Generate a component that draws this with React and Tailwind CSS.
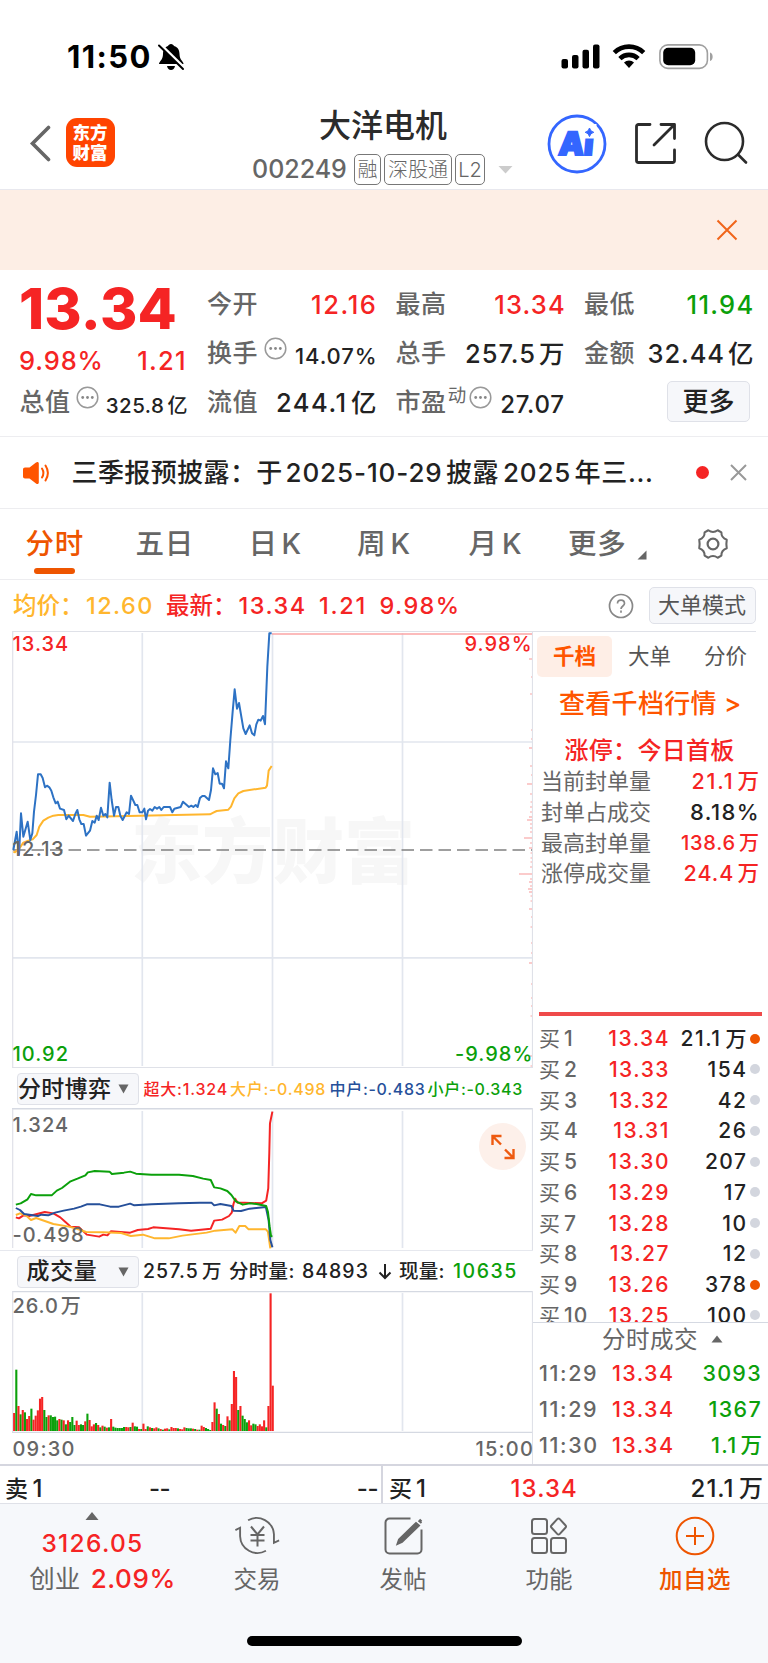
import React from "react";

const QUOTE_DOT = "#ee5500";

const pricePoints =
  "40,690 50,635 57,705 63,580 70,650 83,605 91,660 97,640 102,575 108,525 114,463 122,463 128,474 135,502 141,497 148,502 154,512 160,532 167,550 173,545 180,566 192,570 199,598 206,587 219,603 226,582 232,570 238,598 244,612 251,612 258,647 270,632 277,603 284,608 290,587 296,600 303,563 310,587 316,582 322,592 329,488 335,540 342,587 348,561 355,561 361,587 368,600 380,577 387,582 393,527 406,555 412,555 419,577 427,577 433,566 438,598 444,572 450,567 457,572 464,561 471,566 478,561 484,570 491,561 510,561 517,577 523,566 542,561 549,545 567,561 574,557 580,561 587,555 593,561 600,534 607,528 614,528 627,540 633,510 639,445 646,463 653,459 659,491 666,491 672,505 678,424 685,445 691,360 698,275 704,208 711,266 717,249 730,325 737,342 749,316 756,340 763,346 769,313 775,299 782,302 789,288 795,313 802,140 808,40 815,40";

const avgPoints =
  "40,695 45,697 58,685 70,668 85,662 98,658 110,645 118,620 130,602 145,593 160,587 175,585 250,585 270,590 350,589 420,587 630,583 640,578 650,573 685,569 693,560 703,535 715,520 730,513 797,503 801,497 806,452 815,438";

const flowLines = [
  {
    color: "#f52424",
    points:
      "46,472 55,475 68,466 85,468 130,456 155,460 175,472 190,486 205,500 230,502 252,524 288,530 300,524 312,526 322,514 378,518 400,510 430,507 445,502 520,508 555,512 612,506 622,482 645,479 665,468 673,458 678,432 683,416 690,428 710,428 760,430 773,422 779,385 782,280 784,190 791,155",
  },
  {
    color: "#ffb62e",
    points:
      "46,465 58,460 75,466 90,480 105,474 130,483 155,492 200,500 225,507 250,516 300,517 352,519 380,528 415,524 450,535 490,535 530,527 600,518 625,512 675,508 684,518 695,498 712,498 722,508 772,508 778,515 785,565",
  },
  {
    color: "#26509a",
    points:
      "46,444 58,450 70,462 110,468 120,464 140,466 160,458 185,452 215,446 235,440 252,433 290,433 320,440 345,440 378,431 390,436 440,433 520,430 580,428 614,428 622,436 640,432 672,438 678,452 700,453 725,446 772,441 780,480 785,540 791,562",
  },
  {
    color: "#0ba00b",
    points:
      "46,434 60,430 80,418 90,402 105,406 150,406 165,392 180,384 205,364 225,356 248,346 255,337 275,333 318,335 325,342 360,338 378,335 395,341 440,344 520,344 560,348 590,356 612,360 622,382 640,385 660,393 672,405 685,424 705,434 725,430 745,432 773,438 778,455 783,500 787,528 791,530",
  },
];

// one entry per minute, g = falling, r = rising
const volumes =
  "54r 184g 75r 50g 63r 56g 36r 45r 67g 34r 46r 62r 97r 102r 63g 42g 47r 47g 42g 43g 32g 36r 34g 32r 20g 32r 27g 42g 18g 31r 18r 20g 18g 29r 52g 33r 14r 20r 24g 18r 11g 16r 13g 10r 11g 36r 13g 10g 9g 9g 9g 12g 12r 11r 12g 25r 14g 13g 6r 6g 22r 6r 14g 11r 9g 8r 11r 8g 6r 4g 7r 8r 5g 12r 9r 9r 8g 6r 5r 11r 9g 8g 8g 7r 6g 4r 4g 16r 12r 9g 6g 3g 27r 86r 67g 51r 22g 18r 15g 44r 32g 81r 180r 162r 63g 75r 46g 36g 26g 32r 17r 22g 20g 15r 20r 14r 32r 11g 75r 413r 136r".split(
    " "
  );

// large resting orders along the right edge: [y, length]
const ticks = [
  [659, 3], [677, 1], [694, 2], [730, 1], [739, 1], [748, 3], [766, 2], [775, 1], [784, 5], [794, 2], [802, 1.5],
  [807, 2], [812, 2], [817, 3], [820, 5], [824, 2], [828, 2], [832, 2], [838, 8], [843, 2], [848, 3], [853, 1.5],
  [858, 1.5], [862, 1.5], [867, 2], [874, 13], [879, 2], [882, 3], [886, 2], [889, 4], [892, 3], [896, 1.5], [901, 1.5],
  [909, 3], [917, 1], [927, 1.5], [943, 1], [953, 1], [963, 3], [984, 1], [998, 1], [1006, 1], [1016, 1.5], [1056, 2], [1066, 1.5],
];

const bids = [
  ["1", "13.34", "21.1", "万", true],
  ["2", "13.33", "154", "", false],
  ["3", "13.32", "42", "", false],
  ["4", "13.31", "26", "", false],
  ["5", "13.30", "207", "", false],
  ["6", "13.29", "17", "", false],
  ["7", "13.28", "10", "", false],
  ["8", "13.27", "12", "", false],
  ["9", "13.26", "378", "", true],
  ["10", "13.25", "100", "", false],
];

const trades = [
  ["11:29", "13.34", "3093", ""],
  ["11:29", "13.34", "1367", ""],
  ["11:30", "13.34", "1.1", "万"],
];

const limitRows = [
  ["当前封单量", "21.1", "万", "text-[#f52424] text-[21.5px] tracking-[1.8px]"],
  ["封单占成交", "8.18%", "", "text-[#222] text-[22px] tracking-[1.4px]"],
  ["最高封单量", "138.6", "万", "text-[#f52424] text-[20px] tracking-[0.8px]"],
  ["涨停成交量", "24.4", "万", "text-[#f52424] text-[21.5px] tracking-[1px]"],
];

const Dots = ({ className = "" }) => (
  <svg className={`shrink-0 ${className}`} width="23" height="23" viewBox="0 0 23 23">
    <circle cx="11.5" cy="11.5" r="10.3" fill="none" stroke="#999" strokeWidth="1.5" />
    <circle cx="6.7" cy="11.5" r="1.4" fill="#888" />
    <circle cx="11.5" cy="11.5" r="1.4" fill="#888" />
    <circle cx="16.3" cy="11.5" r="1.4" fill="#888" />
  </svg>
);

const Unit = ({ children, className = "ml-[3px]" }) => (
  <span className={`font-medium tracking-normal ${className}`}>{children}</span>
);

const Label = ({ children }) => (
  <span className="shrink-0 text-[25px] font-medium tracking-[0.6px] whitespace-nowrap text-[#666]">{children}</span>
);

const StatusBar = () => (
  <div className="flex h-[88px] items-start pt-[38px] pl-[67px] text-black">
    <span className="w-[90px] text-[31px] leading-[38px] font-bold tracking-[1.4px]">11:50</span>
    <svg className="mt-[5px]" width="28" height="28" viewBox="0 0 28 28">
      <path d="M14 1c1.500 0 2.600 1 3 2 4 1 5.500 4.500 5.500 8 0 6 4 7.500 4 10H2c0-2.500 4-4 4-10 0-3.500 1.500-7 5-8 .4-1 1.500-2 3-2z" fill="#000" />
      <path d="M10 23h8c-.5 2.600-2 4-4 4s-3.500-1.400-4-4z" fill="#000" />
      <path d="M3.500 1.500L27.500 25" stroke="#fff" strokeWidth="3" />
      <path d="M2 2.500L26 26" stroke="#000" strokeWidth="2" strokeLinecap="round" />
    </svg>
    <svg className="mt-[5px] ml-[376px]" width="40" height="26" viewBox="0 0 40 26">
      <rect x="0.500" y="16" width="6.500" height="9.500" rx="2" />
      <rect x="11" y="12" width="6.500" height="13.500" rx="2" />
      <rect x="21.500" y="6.700" width="6.500" height="18.800" rx="2" />
      <rect x="32" y="1.500" width="6.500" height="24" rx="2" />
    </svg>
    <svg className="mt-[5px] ml-[11px]" width="34" height="26" viewBox="0 0 34 26">
      <path d="M2.300 9.600a21 21 0 0 1 29.400 0" fill="none" stroke="#000" strokeWidth="4.600" />
      <path d="M7.900 15.600a13 13 0 0 1 18.200 0" fill="none" stroke="#000" strokeWidth="4.600" />
      <path d="M17 25l-5-5.500a7.500 7.500 0 0 1 10 0z" />
    </svg>
    <svg className="mt-[5px] ml-[13px]" width="56" height="27" viewBox="0 0 56 27">
      <rect x="0.900" y="1.900" width="47.500" height="23.500" rx="8" fill="none" stroke="#a0a0a0" strokeWidth="1.600" />
      <rect x="4.200" y="4.800" width="32" height="17.500" rx="5" />
      <path d="M51 9.500c3.500 1 3.500 7.500 0 8.500z" fill="#a0a0a0" />
    </svg>
  </div>
);

const Header = () => (
  <div className="flex h-[102px] items-start border-b border-[#e8e8ee] pl-[29px]">
    <svg className="mt-[37px]" width="22" height="37" viewBox="0 0 22 37">
      <path d="M19.500 2.500L3.500 18.500l16 16" fill="none" stroke="#666" strokeWidth="3.600" strokeLinecap="round" />
    </svg>
    <div className="mt-[30px] ml-[14.500px] flex h-[49px] w-[49px] flex-col items-center justify-center rounded-[11px] bg-[#ff4400] text-[17.500px] leading-[20px] font-black text-white">
      <span>东方</span>
      <span>财富</span>
    </div>
    <div className="ml-[137.500px] flex w-[262px] flex-col items-center">
      <div className="mt-[18px] text-[32px] leading-[40px] font-medium text-[#2b2b2b]">大洋电机</div>
      <div className="mt-[7.500px] flex h-[32px] w-full items-center text-[20px] font-light text-[#666]">
        <span className="w-[102px] text-[25px] font-medium text-[#666]">002249</span>
        <span className="flex h-[31px] w-[27px] items-center justify-center rounded-[5px] border border-[#777]">融</span>
        <span className="ml-[3px] flex h-[31px] w-[68px] items-center justify-center rounded-[5px] border border-[#777]">深股通</span>
        <span className="ml-[3px] flex h-[31px] w-[30px] items-center justify-center rounded-[5px] border border-[#777]">L2</span>
        <svg className="ml-[13px]" width="15" height="9" viewBox="0 0 15 9">
          <path d="M0.500 1h14l-7 7.500z" fill="#ccc" />
        </svg>
      </div>
    </div>
    <svg className="mt-[25.500px] ml-[33px]" width="60" height="60" viewBox="0 0 60 60">
      <circle cx="30" cy="30" r="28" fill="none" stroke="#3466ff" strokeWidth="2.800" />
      <g transform="skewX(-5)">
        <text x="14.500" y="41" className="text-[32px] font-black" fill="#3466ff" stroke="#3466ff" strokeWidth="2">Ai</text>
      </g>
      <rect x="36.500" y="10" width="13" height="14.500" fill="#fff" />
      <path d="M42.500 14q.8 3.600 4.300 4.300-3.500.7-4.300 4.300-.8-3.600-4.300-4.300 3.500-.7 4.300-4.300z" fill="#3466ff" stroke="#3466ff" />
    </svg>
    <svg className="mt-[34px] ml-[26.500px]" width="43" height="43" viewBox="0 0 43 43" fill="none" stroke="#2b2b2b" strokeWidth="2.800" strokeLinecap="round" strokeLinejoin="round">
      <path d="M16 2.500H4.500a2 2 0 0 0-2 2v34a2 2 0 0 0 2 2h34a2 2 0 0 0 2-2V28" />
      <path d="M27 2.500h13.500v14M40 3L20 23" />
    </svg>
    <svg className="mt-[33px] ml-[26px]" width="46" height="46" viewBox="0 0 46 46" fill="none" stroke="#2b2b2b" strokeWidth="2.600" strokeLinecap="round">
      <circle cx="21.500" cy="20.500" r="18.500" />
      <path d="M35 33.500l8 8" />
    </svg>
  </div>
);

const QuotePanel = () => (
  <div className="flex h-[167px] items-start border-b border-[#ededf0] pt-[10px] pl-[20px] text-[25.500px] leading-[49px] font-[530] text-[#222]">
    <div className="flex w-[167px] flex-col">
      <div className="ml-[-1px] h-[57px] text-[57px] leading-[57px] font-extrabold tracking-[0.200px] text-[#f52424]">13.34</div>
      <div className="flex h-[41px] justify-between leading-[48px] text-[#f52424]">
        <span className="ml-[-1px] tracking-[0.900px]">9.98%</span>
        <span className="tracking-[1.300px]">1.21</span>
      </div>
      <div className="ml-[-0.500px] flex h-[49px] items-center whitespace-nowrap">
        <Label>总值</Label>
        <Dots className="mb-[11px] ml-[5px]" />
        <span className="mt-[6px] ml-[7px] text-[20.500px] tracking-[0.500px]">
          325.8<Unit className="ml-[3px] text-[20px]">亿</Unit>
        </span>
      </div>
    </div>
    <div className="ml-[20px] flex w-[170.500px] flex-col">
      <div className="flex h-[49px] justify-between">
        <Label>今开</Label>
        <span className="tracking-[1.600px] text-[#f52424]">12.16</span>
      </div>
      <div className="flex h-[49px] items-center">
        <Label>换手</Label>
        <Dots className="mb-[11px] ml-[5.500px]" />
        <span className="mt-[6px] flex-1 text-right text-[22px] tracking-[0.900px]">14.07%</span>
      </div>
      <div className="flex h-[49px] justify-between">
        <Label>流值</Label>
        <span className="tracking-[1.500px]">
          244.1<Unit className="mr-[1px] ml-[3.500px]">亿</Unit>
        </span>
      </div>
    </div>
    <div className="ml-[18px] flex w-[170.500px] flex-col">
      <div className="flex h-[49px] justify-between">
        <Label>最高</Label>
        <span className="tracking-[1.200px] text-[#f52424]">13.34</span>
      </div>
      <div className="flex h-[49px] justify-between">
        <Label>总手</Label>
        <span className="tracking-[1px]">
          257.5<Unit className="mr-[1.500px] ml-[3px]">万</Unit>
        </span>
      </div>
      <div className="flex h-[49px] items-center">
        <Label>市盈</Label>
        <span className="mb-[16px] ml-[1px] text-[18.500px] leading-[30px] font-normal text-[#666]">动</span>
        <Dots className="mb-[11px] ml-[2.500px]" />
        <span className="mt-[3px] ml-[8.500px] text-[24px] tracking-[0.700px]">27.07</span>
      </div>
    </div>
    <div className="ml-[18px] flex w-[170.500px] flex-col">
      <div className="flex h-[49px] justify-between">
        <Label>最低</Label>
        <span className="tracking-[1.300px] text-[#0ba00b]">11.94</span>
      </div>
      <div className="flex h-[49px] justify-between">
        <Label>金额</Label>
        <span className="tracking-[0.900px] whitespace-nowrap">
          32.44<Unit className="mr-[1px] ml-[3px]">亿</Unit>
        </span>
      </div>
      <div className="mt-[3px] mr-[4.500px] flex h-[41px] w-[83px] items-center justify-center self-end rounded-[5px] border border-[#dfe1e8] bg-[#f6f7fa] text-[26px] font-medium">
        更多
      </div>
    </div>
  </div>
);

const NewsBar = () => (
  <div className="flex h-[72px] items-center border-b border-[#ededf0] text-[26px] font-medium text-[#222]">
    <svg className="ml-[22px]" width="30" height="24" viewBox="0 0 30 24">
      <path d="M3 6.500h4.500l6.500-5c1.500-1 2.800-.5 2.800 1v19c0 1.500-1.300 2-2.800 1l-6.500-5H3c-1.200 0-2-.8-2-2v-7c0-1.200.8-2 2-2z" fill="#ff5500" />
      <path d="M20 7.500q2.800 4.500 0 9M23.500 4.500q4.800 7.500 0 15" fill="none" stroke="#ff5500" strokeWidth="2" strokeLinecap="round" />
    </svg>
    <div className="ml-[19.500px] flex w-[591px] whitespace-nowrap">
      <span className="w-[214px] tracking-[0.400px]">三季报预披露：于</span>
      <span className="w-[160.500px] font-[530] tracking-[0.900px]">2025-10-29</span>
      <span className="w-[57px] tracking-[0.400px]">披露</span>
      <span className="w-[71.500px] font-[530] tracking-[0.800px]">2025</span>
      <span className="tracking-[0.700px]">年三...</span>
    </div>
    <div className="ml-[33px] h-[13px] w-[13px] rounded-full bg-[#f52424]" />
    <svg className="ml-[20px]" width="19" height="19" viewBox="0 0 19 19">
      <path d="M2 2l15 15M17 2L2 17" stroke="#999" strokeWidth="2" />
    </svg>
  </div>
);

const Tabs = () => (
  <div className="flex h-[71px] border-b border-[#ededf0] text-[28.500px] leading-[70px] font-medium text-[#666]">
    <div className="ml-[25.500px] flex w-[110px] flex-col text-[#ee5500]">
      <span className="h-[59px] tracking-[0.800px]">分时</span>
      <span className="ml-[8.500px] h-[6px] w-[41px] rounded-full bg-[#ee5500]" />
    </div>
    <span className="w-[113px] tracking-[0.800px]">五日</span>
    <span className="w-[108.500px] tracking-[4.500px]">日K</span>
    <span className="w-[111.500px] tracking-[5px]">周K</span>
    <span className="w-[99.500px] tracking-[5px]">月K</span>
    <span className="w-[69px] tracking-[0.800px]">更多</span>
    <svg className="mt-[41px]" width="10" height="10" viewBox="0 0 10 10">
      <path d="M9.500 0.500v9H0.500z" fill="#666" />
    </svg>
    <svg className="mt-[17.500px] ml-[48.500px]" width="34" height="34" viewBox="0 0 34 34" fill="none" stroke="#666" strokeWidth="2.200" strokeLinejoin="round">
      <path d="M12 2.300q5 3.600 10 0l4 2.300q-.3 5.600 5.700 7.900-.8 4.500 0 9-6 2.300-5.700 7.900l-4 2.300q-5-3.600-10 0l-4-2.300q.3-5.600-5.700-7.900.8-4.500 0-9 6-2.300 5.700-7.900z" transform="translate(1.100 1.100) scale(.935)" />
      <circle cx="17" cy="17" r="5.400" />
    </svg>
  </div>
);

const InfoRow = () => (
  <div className="flex h-[51px] items-center text-[23.500px] font-[530] text-[#f52424]">
    <span className="ml-[13px] w-[73px] font-medium text-[#ffb62e]">均价：</span>
    <span className="w-[80px] tracking-[1.400px] text-[#ffb62e]">12.60</span>
    <span className="w-[72.500px] font-medium">最新：</span>
    <span className="w-[80.500px] tracking-[1.500px]">13.34</span>
    <span className="w-[60.500px] tracking-[1.700px]">1.21</span>
    <span className="w-[228px] tracking-[1.400px]">9.98%</span>
    <svg width="26" height="26" viewBox="0 0 26 26" fill="none" stroke="#888" strokeWidth="1.700">
      <circle cx="13" cy="13" r="11.500" />
      <path d="M9.500 10.500c0-4.500 7-4.500 7 0 0 2.500-3.500 2.500-3.500 5.500M13 17.600v2.200" />
    </svg>
    <span className="ml-[15px] flex h-[37px] w-[107px] items-center justify-center rounded-[5px] border border-[#dfe1e8] bg-[#f6f7fa] text-[22px] font-normal text-[#555]">
      大单模式
    </span>
  </div>
);

const PriceChart = () => (
  <svg className="block" width="533" height="437" viewBox="0 631 533 437">
    <text x="131" y="877" className="text-[71px] font-black" fill="#f7f7f7">东方财富</text>
    <g stroke="#e2e6ee" strokeWidth="1.700">
      <path d="M142.300 633V1066M272.500 633V1066M402.500 633V1066M13 742H532M13 957.800H532" />
    </g>
    <path d="M12.700 1068V631.500H532.500V1068" fill="none" stroke="#dfe1e8" strokeWidth="1.200" />
    <path d="M12 1067.500H532" stroke="#dfe1e8" strokeWidth="1.200" />
    <path d="M272 634H532" stroke="#fba5a5" strokeWidth="1.500" />
    {ticks.map(([y, len]) => (
      <path key={y} d={`M532 ${y}h${-len}`} stroke="#f8a8a8" strokeWidth="1.200" />
    ))}
    <path d="M13 850H532" stroke="#808080" strokeWidth="1.700" strokeDasharray="12.500 6" />
    <g transform="translate(0 620) scale(.33333)" fill="none" strokeLinejoin="round">
      <polyline points={avgPoints} stroke="#ffb62e" strokeWidth="6" />
      <polyline points={pricePoints} stroke="#2d72c4" strokeWidth="6" />
    </g>
    <g className="text-[20px] font-[530]" letterSpacing="1">
      <text x="12.500" y="651" fill="#f52424">13.34</text>
      <text x="464.500" y="651" fill="#f52424">9.98%</text>
      <text x="12.500" y="856" fill="#666" letterSpacing="1.300">12.13</text>
      <text x="12.500" y="1061" fill="#0ba00b">10.92</text>
      <text x="455" y="1061" fill="#0ba00b">-9.98%</text>
    </g>
  </svg>
);

const Selector = ({ children, className = "tracking-[0.300px]" }) => (
  <span className="ml-[17px] flex h-[32px] w-[122px] shrink-0 items-center rounded-[4px] border border-[#dfe1e8] bg-[#f6f7fa] text-[23px] font-medium text-[#222]">
    <span className={`w-[90px] text-center whitespace-nowrap ${className}`}>{children}</span>
    <svg className="ml-[9.500px]" width="11" height="10" viewBox="0 0 11 10">
      <path d="M0.500 0.500h10l-5 9z" fill="#666" />
    </svg>
  </span>
);

const FlowChart = () => (
  <div>
    <div className="flex h-[40px] items-center pt-[2px] text-[16px] font-medium">
      <Selector>分时博弈</Selector>
      <span className="ml-[4.500px] w-[86.500px] tracking-[0.800px] text-[#f52424]">超大:1.324</span>
      <span className="w-[99.500px] tracking-[0.700px] text-[#ffb62e]">大户:-0.498</span>
      <span className="w-[98px] tracking-[0.700px] text-[#26509a]">中户:-0.483</span>
      <span className="tracking-[0.700px] text-[#0ba00b]">小户:-0.343</span>
    </div>
    <div className="relative">
      <svg className="block" width="533" height="142" viewBox="0 1108 533 142">
        <path d="M12 1108.700H532" stroke="#d5d9e2" strokeWidth="1.400" />
        <path d="M12.700 1109V1248M532.500 1108V1250" stroke="#dfe1e8" strokeWidth="1.200" />
        <path d="M142.300 1111V1248M272.500 1111V1248M402.500 1111V1248" stroke="#e2e6ee" strokeWidth="1.700" />
        <g transform="translate(0 1060) scale(.34436 .33333)" fill="none" strokeWidth="5.800" strokeLinejoin="round">
          {flowLines.map((line) => (
            <polyline key={line.color} points={line.points} stroke={line.color} />
          ))}
        </g>
        <g className="text-[20px] font-medium" fill="#666" letterSpacing="1">
          <text x="12.500" y="1131.500">1.324</text>
          <text x="12.500" y="1241.700">-0.498</text>
        </g>
      </svg>
      <div className="absolute top-[15px] left-[479px] flex h-[47px] w-[47px] items-center justify-center rounded-full bg-[#fdf0ea]">
        <svg width="26" height="26" viewBox="0 0 26 26" fill="none" stroke="#ee5a10" strokeWidth="2.400">
          <path d="M11.500 2H2.500v9M2.500 2l8.500 8.500M23.500 15v9h-9M23.500 24L15 15.500" />
        </svg>
      </div>
    </div>
  </div>
);

const VolumeChart = () => (
  <div>
    <div className="flex h-[41px] items-center border-t border-[#e6e8ee] pt-[1px] text-[19.500px] font-[530] text-[#222]">
      <Selector className="mr-[1px] ml-[-1px] tracking-[0.700px]">成交量</Selector>
      <span className="ml-[4px] w-[86px] tracking-[1.100px]">
        257.5<Unit className="ml-[3px]">万</Unit>
      </span>
      <span className="w-[73px] font-medium tracking-[0.300px]">分时量:</span>
      <span className="w-[76px] tracking-[1px]">84893</span>
      <svg className="w-[14px]" width="14" height="17" viewBox="0 0 14 17" fill="none" stroke="#222" strokeWidth="2">
        <path d="M7 1v14M1.500 9.500L7 15l5.500-5.500" />
      </svg>
      <span className="ml-[7px] w-[54px] font-medium tracking-[0.300px]">现量:</span>
      <span className="tracking-[1.500px] text-[#0ba00b]">10635</span>
    </div>
    <svg className="block" width="533" height="142" viewBox="0 1291 533 142">
      <path d="M12 1291.500H532" stroke="#d5d9e2" strokeWidth="1.400" />
      <path d="M12.700 1291V1432M532.500 1291V1433" stroke="#dfe1e8" strokeWidth="1.200" />
      <path d="M142.300 1293V1431M402.500 1293V1431" stroke="#e2e6ee" strokeWidth="1.700" />
      {volumes.map((v, i) => {
        const h = parseInt(v, 10) / 3;
        return (
          <rect
            key={i}
            x={13.1 + i * 2.155}
            y={1431 - h}
            width="2.100"
            height={h}
            fill={v.endsWith("g") ? "#0ba00b" : "#f52424"}
          />
        );
      })}
      <path d="M12 1432.300H532" stroke="#d5d9e2" strokeWidth="1.200" />
      <text x="12.500" y="1312.700" className="text-[20px] font-medium" fill="#666" letterSpacing="0.900">
        26.0<tspan dx="2">万</tspan>
      </text>
    </svg>
    <div className="flex h-[31px] items-center justify-between border-r border-[#dfe1e8] pt-[2px] pl-[12.500px] text-[20px] leading-[29px] font-medium tracking-[1.200px] text-[#666]">
      <span>09:30</span>
      <span className="mr-[-2px]">15:00</span>
    </div>
  </div>
);

const SidePanel = () => (
  <div className="flex h-[833px] w-[235px] flex-col font-[530]">
    <div className="mr-[12px] flex h-[46px] items-end border-t border-[#dfe1e8] text-[21.500px] leading-[41px] font-normal text-[#555]">
      <span className="ml-[4px] w-[75px] shrink-0 rounded-[5px] bg-[#feeee6] text-center font-bold text-[#ff5500]">千档</span>
      <span className="w-[75px] shrink-0 text-center">大单</span>
      <span className="ml-[1px] w-[75px] shrink-0 text-center">分价</span>
    </div>
    <div className="mt-[8px] ml-[26px] h-[38px] text-[26px] leading-[38px] font-medium tracking-[0.300px] whitespace-nowrap text-[#ff5500]">查看千档行情 &gt;</div>
    <div className="mt-[10px] ml-[31.500px] h-[33px] text-[24px] leading-[36px] font-medium tracking-[0.300px] text-[#f52424]">涨停：今日首板</div>
    <div className="leading-[31px]">
      {limitRows.map(([label, value, unit, style]) => (
        <div key={label} className="flex h-[30.800px] items-center justify-between pr-[8px] pl-[8px]">
          <span className="text-[22px] font-normal whitespace-nowrap text-[#666]">{label}</span>
          <span className={style}>
            {value}
            {unit && <Unit className="mr-[1px] ml-[3px]">{unit}</Unit>}
          </span>
        </div>
      ))}
    </div>
    <div className="mt-[123px] ml-[6px] h-[4px] w-[223px] shrink-0 bg-[#ef4a4a]" />
    <div className="h-[307px] shrink-0 overflow-hidden border-b border-[#d5d9e2] pt-[7px]">
      {bids.map(([level, price, volume, unit, big]) => (
        <div key={level} className="flex h-[30.750px] items-center pl-[6px] text-[21px] leading-[31px] text-[#222]">
          <span className="w-[66px] font-medium tracking-[1px] text-[#666]">
            <span className="mr-[4px] font-normal tracking-normal">买</span>
            {level}
          </span>
          <span className="w-[65px] text-right tracking-[1.500px] text-[#f52424]">{price}</span>
          <span className="w-[77.500px] text-right tracking-[1.500px]">
            {volume}
            {unit && <Unit className="mr-[1px] ml-[4px]">{unit}</Unit>}
          </span>
          <span
            className="ml-[2.500px] h-[10px] w-[10px] rounded-full"
            style={{ backgroundColor: big ? QUOTE_DOT : "#d3d6de" }}
          />
        </div>
      ))}
    </div>
    <div className="flex h-[32px] shrink-0 items-center text-[23.500px] font-normal text-[#666]">
      <span className="ml-[69px] tracking-[0.500px]">分时成交</span>
      <svg className="ml-[13px]" width="12" height="8" viewBox="0 0 12 8">
        <path d="M6 0.500l5.500 7H0.500z" fill="#666" />
      </svg>
    </div>
    {trades.map(([time, price, volume, unit], i) => (
      <div key={i} className="flex h-[36px] items-center justify-between pr-[6px] pl-[6px] text-[21.500px] leading-[36px]">
        <span className="w-[73px] font-medium tracking-[1.600px] text-[#666]">{time}</span>
        <span className="tracking-[1.400px] text-[#f52424]">{price}</span>
        <span className="flex-1 text-right tracking-[1.300px] text-[#0ba00b]">
          {volume}
          {unit && <Unit>{unit}</Unit>}
        </span>
      </div>
    ))}
  </div>
);

const BestQuote = () => (
  <div className="flex h-[40px] border-t-2 border-b border-t-[#d5d6df] border-b-[#dfe1e8] text-[24px] leading-[45px] font-[530] tracking-[1px] text-[#222]">
    <div className="flex w-[383px] border-r-2 border-[#d5d6df] pl-[5px]">
      <span className="w-[144px]">
        <span className="mr-[4.500px] text-[23px] font-medium tracking-normal">卖</span>1
      </span>
      <span className="flex-1 tracking-[-0.500px]">--</span>
      <span className="mr-[3px] tracking-[-0.500px]">--</span>
    </div>
    <div className="flex flex-1 pr-[5px] pl-[6px]">
      <span className="w-[121.500px]">
        <span className="mr-[4px] text-[23px] font-medium tracking-normal">买</span>1
      </span>
      <span className="flex-1 tracking-[1.100px] text-[#f52424]">13.34</span>
      <span>
        21.1<Unit className="ml-[4.500px]">万</Unit>
      </span>
    </div>
  </div>
);

const NavItem = ({ label, className, children }) => (
  <div className={`flex w-[146px] flex-col items-center text-[23.500px] ${className}`}>
    <svg className="mt-[11px]" width="46" height="42" viewBox="0 0 46 42" fill="none" stroke="currentColor" strokeWidth="2">
      {children}
    </svg>
    <span className="mt-[5px] leading-[36px]">{label}</span>
  </div>
);

const BottomNav = () => (
  <div className="flex h-[159px] flex-col items-center bg-[#f6f8fb]">
    <div className="flex h-[132px] w-full text-[#666]">
      <div className="flex w-[184px] flex-col items-center font-[530]">
        <svg className="mt-[8px]" width="14" height="8" viewBox="0 0 14 8">
          <path d="M7 0l6.500 8H0.500z" fill="#666" />
        </svg>
        <span className="mt-[5px] ml-[1px] text-[24.500px] leading-[36px] tracking-[1.300px] text-[#f52424]">3126.05</span>
        <span className="ml-[21px] flex leading-[36px]">
          <span className="w-[61.500px] text-[25.500px] font-normal">创业</span>
          <span className="text-[26px] tracking-[0.600px] text-[#f52424]">2.09%</span>
        </span>
      </div>
      <NavItem label="交易">
        <path d="M13.500 5a18.500 18.500 0 0 1 27.500 15v9l5.500-2.500M32.500 37.500A18.500 18.500 0 0 1 5 22v-9L0 15.500" strokeWidth="2" transform="translate(1.400 .500) scale(.94)" />
        <path d="M17 11.500l6.500 8 6.500-8M16.500 20h14M16.500 25.500h14M23.500 19.500v12" />
      </NavItem>
      <NavItem label="发帖">
        <path d="M30.500 3.500h-21a4 4 0 0 0-4 4v27a4 4 0 0 0 4 4h28a4 4 0 0 0 4-4v-20" />
        <path d="M36 8l3 2.500L22 27l-4.500 2 1.500-4.500zM38.500 5.500l3 2.500M39.500 4.500l2 2" fill="currentColor" />
      </NavItem>
      <NavItem label="功能">
        <rect x="6" y="4" width="15" height="15" rx="2.500" />
        <rect x="6" y="23" width="15" height="15" rx="2.500" />
        <rect x="25" y="23" width="15" height="15" rx="2.500" />
        <path d="M31.200 4.100q1.300-1.300 2.600 0l5.600 6.100q1.300 1.300 0 2.600l-5.600 6.100q-1.300 1.300-2.600 0l-5.600-6.100q-1.300-1.300 0-2.600z" />
      </NavItem>
      <NavItem label="加自选" className="font-medium tracking-[0.500px] text-[#ee5500]">
        <circle cx="23" cy="21" r="18.300" />
        <path d="M14 21h18M23 12v18" />
      </NavItem>
    </div>
    <div className="h-[10px] w-[275px] rounded-full bg-black" />
  </div>
);

const App = () => {
  return (
    <div className="h-[1663px] w-[768px] overflow-hidden bg-white font-['Inter','Noto_Sans_CJK_SC',sans-serif]">
      <StatusBar />
      <Header />
      <div className="flex h-[80px] items-center justify-end bg-[#fdeee5] pr-[30px]">
        <svg className="mb-[1px]" width="22" height="22" viewBox="0 0 22 22">
          <path d="M1.500 1.500l19 19M20.500 1.500l-19 19" stroke="#f0651a" strokeWidth="2" />
        </svg>
      </div>
      <QuotePanel />
      <NewsBar />
      <Tabs />
      <InfoRow />
      <div className="flex">
        <div className="w-[533px] shrink-0">
          <PriceChart />
          <FlowChart />
          <VolumeChart />
        </div>
        <SidePanel />
      </div>
      <BestQuote />
      <BottomNav />
    </div>
  );
};

export default App;
